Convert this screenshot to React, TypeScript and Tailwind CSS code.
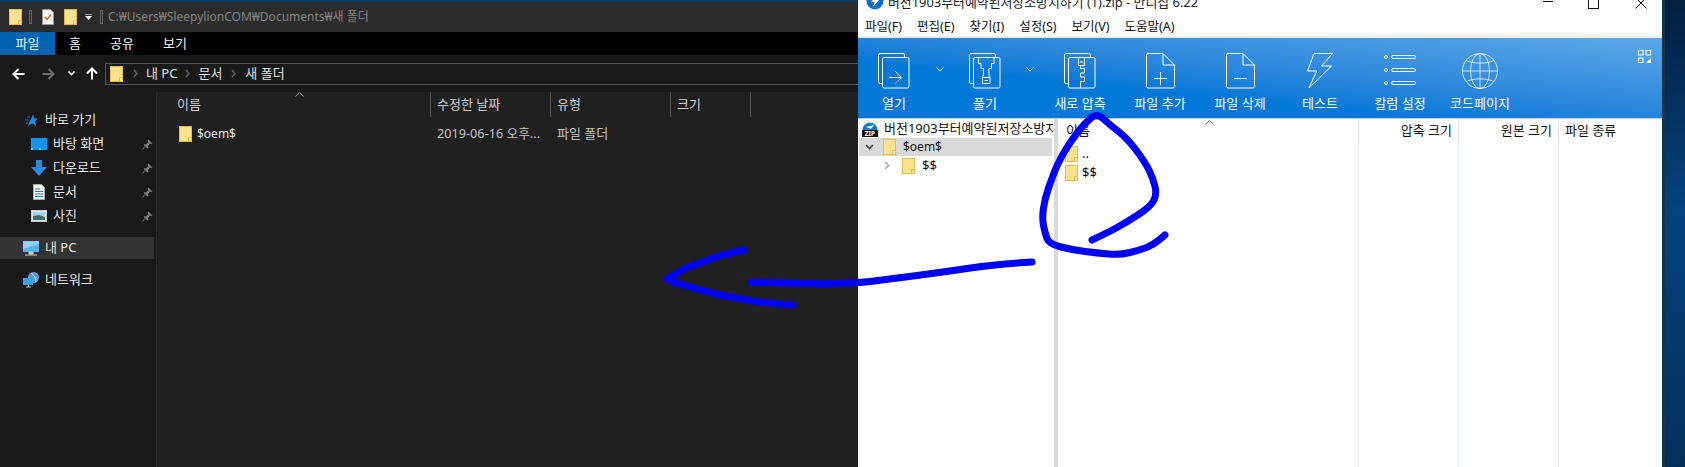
import type { ReactNode } from "react";

function Folder({ className = "" }: { className?: string }) {
  return (
    <svg viewBox="0 0 13 16" className={`w-[13px] h-[16px] shrink-0 ${className}`}>
      <rect x="0.5" y="0.5" width="12" height="15" fill="#fde28f" stroke="#e6bb50" />
      <path d="M9.5 15.5V11.5H12.5" fill="#fff0b8" stroke="#e6bb50" />
    </svg>
  );
}

function Pin() {
  return (
    <svg viewBox="0 0 11 11" className="w-[11px] h-[11px] ml-auto mr-[3px] shrink-0">
      <path d="M6.5 .5L10.5 4.5L9.5 5L8 4.8L6 7L6.2 8.8L5.2 9.6L1.6 6L2.4 5L4.2 5.2L6.2 3.2L6 1.6Z" fill="#767b80" />
      <path d="M3 7.5L.5 10.5" stroke="#767b80" />
    </svg>
  );
}

function NavRow({ icon, label, pin }: { icon: ReactNode; label: string; pin?: boolean }) {
  return (
    <div className="flex items-center h-6 pl-[31px]">
      <div className="w-[22px] shrink-0">{icon}</div>
      <span className="text-[#e6e6e6]">{label}</span>
      {pin && <Pin />}
    </div>
  );
}

function Chevron() {
  return (
    <svg viewBox="0 0 8 5" className="w-2 h-[5px]">
      <path d="M.5 .5L4 4L7.5 .5" fill="none" stroke="#fff" />
    </svg>
  );
}

function ToolItem({ w, label, children }: { w: string; label: string; children: ReactNode }) {
  return (
    <div className={`${w} shrink-0 flex flex-col items-center`}>
      <div className="h-[50px] pt-[15px] flex items-start justify-center">{children}</div>
      <span className="text-white mt-[6px] leading-[18px]">{label}</span>
    </div>
  );
}

function Crumb({ className = "mx-[8px]" }: { className?: string }) {
  return (
    <svg viewBox="0 0 5 9" className={`w-[5px] h-[9px] ${className}`}>
      <path d="M1 1L4 4.5L1 8" fill="none" stroke="#606060" strokeWidth="1.6" />
    </svg>
  );
}

// rounds off the corners of a pen stroke
function smooth(pts: number[][]) {
  let d = `M${pts[0][0]} ${pts[0][1]}`;
  for (let i = 1; i < pts.length - 1; i++) {
    const mx = (pts[i][0] + pts[i + 1][0]) / 2;
    const my = (pts[i][1] + pts[i + 1][1]) / 2;
    d += `Q${pts[i][0]} ${pts[i][1]} ${mx} ${my}`;
  }
  const last = pts[pts.length - 1];
  return `${d}L${last[0]} ${last[1]}`;
}

const loop = [
  [1092, 240], [1107, 233], [1127, 222], [1150, 207], [1157, 195], [1153, 178], [1145, 162], [1127, 138],
  [1110, 125], [1097, 113], [1085, 123], [1070, 142], [1058, 163], [1052, 178], [1045, 198], [1042, 218],
  [1045, 233], [1049, 244], [1073, 250], [1097, 253], [1120, 255], [1140, 250], [1153, 245], [1165, 235],
];
const shaft = [[1032, 262], [997, 264], [944, 272], [890, 279], [858, 283], [811, 284], [751, 282]];

const iconStroke = { fill: "none", stroke: "#fff", strokeWidth: 1 };

function Explorer() {
  return (
    <div className="w-[858px] shrink-0 flex flex-col bg-[#202020]">
      <div className="h-[2px] bg-[#0d3a66]" />
      <div className="h-[30px] bg-[#2b2b2b] flex items-center pl-[9px] text-[#858585]">
        <Folder />
        <div className="ml-[7px] w-[3px] h-[14px] border border-[#666]" />
        <svg viewBox="0 0 12 16" className="w-3 h-4 ml-[10px]">
          <path d="M.5 .5H8.5L11.5 3.5V15.5H.5Z" fill="#f4f4f4" stroke="#999" />
          <path d="M3 8L5 10.5L9 5.5" fill="none" stroke="#d9602c" strokeWidth="1.4" />
        </svg>
        <Folder className="ml-[10px]" />
        <svg viewBox="0 0 7 6" className="w-[7px] h-[6px] ml-[8px]">
          <path d="M0 0H7" stroke="#fff" />
          <path d="M0 2L3.5 6L7 2Z" fill="#fff" />
        </svg>
        <div className="ml-[8px] w-[3px] h-[14px] border border-[#666]" />
        <span className="ml-[5px] whitespace-nowrap text-[12px]">C:₩Users₩SleepylionCOM₩Documents₩새 폴더</span>
      </div>
      <div className="h-[23px] bg-black flex text-[#f2f2f2]">
        <div className="w-[55px] bg-[#0063b1] text-center leading-[22px]">파일</div>
        <div className="w-[40px] text-center leading-[22px]">홈</div>
        <div className="w-[54px] text-center leading-[22px]">공유</div>
        <div className="w-[52px] text-center leading-[22px]">보기</div>
      </div>
      <div className="h-[37px] bg-[#191919] flex items-center pl-[12px]">
        <svg viewBox="0 0 13 12" className="w-[13px] h-3">
          <path d="M12.5 6H2M6.5 1L1.5 6L6.5 11" fill="none" stroke="#fff" strokeWidth="2" />
        </svg>
        <svg viewBox="0 0 13 12" className="w-[13px] h-3 ml-[17px]">
          <path d="M.5 6H11M6.5 1L11.5 6L6.5 11" fill="none" stroke="#6e6e6e" strokeWidth="2" />
        </svg>
        <svg viewBox="0 0 7 5" className="w-[7px] h-[5px] ml-[13px]">
          <path d="M.5 .5L3.5 3.5L6.5 .5" fill="none" stroke="#eee" strokeWidth="1.6" />
        </svg>
        <svg viewBox="0 0 12 13" className="w-3 h-[13px] ml-[11px]">
          <path d="M6 12.5V2M1 6.5L6 1.5L11 6.5" fill="none" stroke="#fff" strokeWidth="2" />
        </svg>
        <div className="ml-[7px] flex-1 h-[22px] border border-r-0 border-[#555] flex items-center pl-[4px] text-[#e0e0e0]">
          <Folder />
          <div className="ml-[2px] flex items-center">
            <Crumb />
            <span>내 PC</span>
            <Crumb />
            <span>문서</span>
            <Crumb className="ml-[9px] mr-[9px]" />
            <span>새 폴더</span>
          </div>
        </div>
      </div>
      <div className="flex-1 flex min-h-0">
        <div className="w-[156px] shrink-0 bg-[#191919] pt-[16px]">
          <div className="flex items-center h-6 pl-[25px]">
            <svg viewBox="0 0 13 13" className="w-[13px] h-[13px] mr-[7px]">
              <path d="M8 0L9.4 4.4H13L10 7L11.2 12L7.2 9.2L3 12L4.6 7.4L6.4 4.4Z" fill="#1a8ae6" />
              <path d="M0 6H3M1 9H3M2 3H5" stroke="#1a6fb5" />
            </svg>
            <span className="text-[#e6e6e6]">바로 가기</span>
          </div>
          <NavRow
            pin
            label="바탕 화면"
            icon={
              <svg viewBox="0 0 16 12" className="w-4 h-3">
                <rect width="16" height="12" fill="#1593ee" />
                <path d="M0 11H16" stroke="#d5ecff" strokeDasharray="2 6" />
              </svg>
            }
          />
          <NavRow
            pin
            label="다운로드"
            icon={
              <svg viewBox="0 0 16 16" className="w-4 h-4">
                <path d="M5 0H11V7H16L8 16L0 7H5Z" fill="#2e89e0" />
              </svg>
            }
          />
          <NavRow
            pin
            label="문서"
            icon={
              <svg viewBox="0 0 16 16" className="w-4 h-4">
                <path d="M2.5 .5H10.5L13.5 3.5V15.5H2.5Z" fill="#f4f4f4" stroke="#aaa" />
                <path d="M4 5H9M4 7.5H12M4 10H12M4 12.5H12" stroke="#3a7ab8" />
              </svg>
            }
          />
          <NavRow
            pin
            label="사진"
            icon={
              <svg viewBox="0 0 16 12" className="w-4 h-3">
                <rect x=".5" y=".5" width="15" height="11" fill="#dfe9f2" stroke="#c8c8c8" />
                <path d="M2 2H14V6H2Z" fill="#a8cdea" />
                <path d="M2 6L8 5L14 7V10H2Z" fill="#3f6f62" />
              </svg>
            }
          />
          <div className="mt-[9px] mr-[2px] h-[22px] bg-[#333] flex items-center pl-[23px]">
            <svg viewBox="0 0 16 15" className="w-4 h-[15px] mr-[6px]">
              <rect width="16" height="11" fill="#56b4f5" />
              <path d="M0 0H16V3L0 8Z" fill="#8fd0fb" />
              <path d="M6 11H10V13H6ZM2 14H14" stroke="#cfcfcf" fill="#cfcfcf" />
            </svg>
            <span className="text-[#e6e6e6]">내 PC</span>
          </div>
          <div className="mt-[9px] h-6 flex items-center pl-[23px]">
            <svg viewBox="0 0 16 16" className="w-4 h-4 mr-[6px]">
              <circle cx="10.5" cy="5.5" r="5.5" fill="#5c9bd0" />
              <path d="M8 1C11 3 13 6 13 10" stroke="#cfe4f5" fill="none" />
              <rect x="0" y="6" width="10" height="7" fill="#36a3ee" />
              <path d="M3 15H8M5.5 13V15" stroke="#c8c8c8" />
            </svg>
            <span className="text-[#e6e6e6]">네트워크</span>
          </div>
        </div>
        <div className="w-[1px] bg-[#2b2b2b]" />
        <div className="flex-1 min-w-0 pl-[20px] relative">
          <svg viewBox="0 0 9 5" className="absolute left-[138px] top-0 w-[9px] h-[5px]">
            <path d="M.5 4.5L4.5 .5L8.5 4.5" fill="none" stroke="#a0a0a0" />
          </svg>
          <div className="flex h-[25px] items-center text-[#cfcfcf]">
            <div className="w-[253px] leading-[25px]">이름</div>
            <div className="w-[120px] h-full border-l border-[#555] pl-[6px] leading-[25px]">수정한 날짜</div>
            <div className="w-[120px] h-full border-l border-[#555] pl-[6px] leading-[25px]">유형</div>
            <div className="w-[80px] h-full border-l border-[#555] pl-[6px] leading-[25px]">크기</div>
            <div className="h-full border-l border-[#555]" />
          </div>
          <div className="flex h-[33px] items-center">
            <div className="w-[253px] flex items-center pl-[2px] text-[#e6e6e6]">
              <Folder />
              <span className="ml-[5px] text-[12px]">$oem$</span>
            </div>
            <div className="w-[120px] pl-[7px] text-[#c4c4c4] whitespace-nowrap text-[12.7px]">2019-06-16 오후...</div>
            <div className="w-[120px] pl-[7px] text-[#c4c4c4]">파일 폴더</div>
          </div>
        </div>
      </div>
    </div>
  );
}

function Bandizip() {
  return (
    <div className="w-[804px] shrink-0 flex flex-col bg-white text-[#111]">
      <div className="h-[28px] -mt-[11px] flex items-center pl-[8px] relative">
        <svg viewBox="0 0 18 18" className="w-[18px] h-[18px] -mt-[4px]">
          <circle cx="9" cy="9" r="8.5" fill="#0b6fd0" />
          <path d="M11 3L5 10H8.5L7 15L13 8H9.5Z" fill="#fff" />
        </svg>
        <span className="ml-[4px] whitespace-nowrap text-[#222] text-[12.9px]">버전1903부터예약된저장소방지하기 (1).zip - 반디집 6.22</span>
        <div className="ml-auto flex items-center pr-[15px]">
          <svg viewBox="0 0 10 1" className="w-[10px] h-[1px] mb-[4px]"><path d="M0 .5H10" stroke="#111" /></svg>
          <svg viewBox="0 0 11 11" className="w-[11px] h-[11px] ml-[35px]"><rect x=".5" y=".5" width="10" height="10" fill="none" stroke="#111" /></svg>
          <svg viewBox="0 0 12 12" className="w-3 h-3 ml-[36px]"><path d="M.5 .5L11.5 11.5M11.5 .5L.5 11.5" stroke="#111" /></svg>
        </div>
      </div>
      <div className="h-[19px] flex items-center pl-[7px] pt-[1px] gap-[15px] whitespace-nowrap text-[12.5px]">
        <span>파일(F)</span>
        <span>편집(E)</span>
        <span>찾기(I)</span>
        <span>설정(S)</span>
        <span>보기(V)</span>
        <span>도움말(A)</span>
      </div>
      <div className="h-[2px] bg-[#f0f0f0]" />
      <div className="h-[80px] flex bg-linear-to-tr from-[#0078d7] from-35% to-[#5ca8e8] relative">
        <ToolItem w="w-[72px]" label="열기">
          <svg viewBox="0 0 32 36" className="w-8 h-9" {...iconStroke}>
            <path d="M4 30.5H2A1.5 1.5 0 0 1 .5 29V2A1.5 1.5 0 0 1 2 .5H25A1.5 1.5 0 0 1 26.5 2V4.5" />
            <rect x="4.5" y="4.5" width="26.5" height="30.5" rx="1.5" />
            <path d="M11 24.5H23M17 18L23.5 24.5L17 31" />
          </svg>
        </ToolItem>
        <div className="w-5 shrink-0 pt-[29px] flex justify-center"><Chevron /></div>
        <ToolItem w="w-[70px]" label="풀기">
          <svg viewBox="0 0 32 36" className="w-8 h-9" {...iconStroke}>
            <path d="M4 30.5H2A1.5 1.5 0 0 1 .5 29V2A1.5 1.5 0 0 1 2 .5H25A1.5 1.5 0 0 1 26.5 2V4.5" />
            <rect x="4.5" y="4.5" width="26.5" height="30.5" rx="1.5" />
            <path d="M9.5 4.5V10.5H12V15.5H14.5V21L13.5 24.5V30.5H21V24.5L20 21V15.5H22.5V10.5H25V4.5M13.5 24.5H21M15.5 27.5H19" />
          </svg>
        </ToolItem>
        <div className="w-5 shrink-0 pt-[29px] flex justify-center"><Chevron /></div>
        <ToolItem w="w-20" label="새로 압축">
          <svg viewBox="0 0 32 36" className="w-8 h-9" {...iconStroke}>
            <path d="M4 30.5H2A1.5 1.5 0 0 1 .5 29V2A1.5 1.5 0 0 1 2 .5H25A1.5 1.5 0 0 1 26.5 2V4.5" />
            <rect x="4.5" y="4.5" width="26.5" height="30.5" rx="1.5" />
            <path d="M14.5 4.5V12.5H20.5V4.5M16 9H19M16.5 12.5V15.5H20.5V20H16.5V24H20.5V28.5H16.5V35" />
          </svg>
        </ToolItem>
        <ToolItem w="w-20" label="파일 추가">
          <svg viewBox="0 0 29 36" className="w-[29px] h-9" {...iconStroke}>
            <path d="M17 .5H2A1.5 1.5 0 0 0 .5 2V33.5A1.5 1.5 0 0 0 2 35H27A1.5 1.5 0 0 0 28.5 33.5V12L17 .5V12H28.5" />
            <path d="M14.5 19V32M8 25.5H21" />
          </svg>
        </ToolItem>
        <ToolItem w="w-20" label="파일 삭제">
          <svg viewBox="0 0 29 36" className="w-[29px] h-9" {...iconStroke}>
            <path d="M17 .5H2A1.5 1.5 0 0 0 .5 2V33.5A1.5 1.5 0 0 0 2 35H27A1.5 1.5 0 0 0 28.5 33.5V12L17 .5V12H28.5" />
            <path d="M8 25.5H21" />
          </svg>
        </ToolItem>
        <ToolItem w="w-20" label="테스트">
          <svg viewBox="0 0 26 36" className="w-[26px] h-9" {...iconStroke}>
            <path d="M7 .5H25.5L14.5 13H24.5L2 35L9.7 18H.5Z" />
          </svg>
        </ToolItem>
        <ToolItem w="w-20" label="칼럼 설정">
          <svg viewBox="0 0 32 36" className="w-8 h-9" {...iconStroke}>
            <circle cx="2" cy="4" r="1.5" />
            <circle cx="2" cy="17" r="1.5" />
            <circle cx="2" cy="30" r="1.5" />
            <rect x="7.5" y="2.5" width="24" height="3" rx="1.5" />
            <rect x="7.5" y="15.5" width="24" height="3" rx="1.5" />
            <rect x="7.5" y="28.5" width="24" height="3" rx="1.5" />
          </svg>
        </ToolItem>
        <ToolItem w="w-20" label="코드페이지">
          <svg viewBox="0 0 36 36" className="w-9 h-9" fill="none" stroke="#fff" strokeOpacity=".75">
            <circle cx="18" cy="18" r="17.5" />
            <ellipse cx="18" cy="18" rx="9.5" ry="17.5" />
            <path d="M18 .5V35.5M.5 18H35.5M4 7.5C12 11 24 11 32 7.5M4 28.5C12 25 24 25 32 28.5" />
          </svg>
        </ToolItem>
        <svg viewBox="0 0 13 13" className="absolute right-[11px] top-[12px] w-[13px] h-[13px]" fill="none" stroke="#fff">
          <rect x=".5" y=".5" width="4.5" height="4.5" />
          <rect x="8" y=".5" width="4.5" height="4.5" />
          <rect x=".5" y="8" width="4.5" height="4.5" />
          <path d="M13 8V13H8Z" fill="#fff" stroke="none" />
        </svg>
      </div>
      <div className="h-[1px] bg-[#c9c9c9]" />
      <div className="flex-1 flex min-h-0">
        <div className="w-[196px] shrink-0 overflow-hidden whitespace-nowrap">
          <div className="h-[19px] flex items-center pl-[4px]">
            <svg viewBox="0 0 16 16" className="w-4 h-4 shrink-0">
              <path d="M.5 9A7.5 7.5 0 0 1 15.5 9Z" fill="#1478d4" />
              <path d="M4 6L12 4L9 8Z" fill="#fff" />
              <rect x="0" y="9" width="16" height="7" fill="#111" />
              <text x="8" y="15" textAnchor="middle" fontSize="6.5" fontWeight="700" fill="#fff">ZIP</text>
            </svg>
            <span className="ml-[6px]">버전1903부터예약된저장소방지하기</span>
          </div>
          <div className="h-[18px] bg-[#d9d9d9] mr-[2px] ml-[1px] flex items-center pl-[6px]">
            <svg viewBox="0 0 9 6" className="w-[9px] h-[6px]">
              <path d="M1 1L4.5 4.5L8 1" fill="none" stroke="#444" strokeWidth="1.6" />
            </svg>
            <Folder className="ml-[9px]" />
            <span className="ml-[7px] text-[12px]">$oem$</span>
          </div>
          <div className="h-[19px] flex items-center pl-[26px]">
            <svg viewBox="0 0 6 9" className="w-[6px] h-[9px]">
              <path d="M1 1L4.5 4.5L1 8" fill="none" stroke="#aaa" strokeWidth="1.6" />
            </svg>
            <Folder className="ml-[12px]" />
            <span className="ml-[7px]">$$</span>
          </div>
        </div>
        <div className="w-[4px] shrink-0 bg-[#d9d9d9]" />
        <div className="flex-1 min-w-0 flex relative">
          <svg viewBox="0 0 9 5" className="absolute left-[147px] top-[1px] w-[9px] h-[5px]">
            <path d="M.5 4.5L4.5 .5L8.5 4.5" fill="none" stroke="#777" />
          </svg>
          <div className="w-[300px] shrink-0 flex flex-col">
            <div className="h-[24px] pl-[8px] flex items-center">이름</div>
            <div className="pl-[7px] pt-[1px]">
              <div className="h-[19px] flex items-center">
                <Folder />
                <span className="ml-[4px] mt-[1px]">..</span>
              </div>
              <div className="h-[19px] flex items-center">
                <Folder />
                <span className="ml-[4px] mt-[1px]">$$</span>
              </div>
            </div>
          </div>
          <div className="w-[100px] shrink-0 flex flex-col">
            <div className="h-[24px] border-l border-[#e5e5e5] pr-[6px] flex items-center justify-end">압축 크기</div>
            <div className="flex-1 border-l border-[#e8f1fc]" />
          </div>
          <div className="w-[100px] shrink-0 flex flex-col">
            <div className="h-[24px] border-l border-[#e5e5e5] pr-[6px] flex items-center justify-end">원본 크기</div>
            <div className="flex-1 border-l border-[#e8f1fc]" />
          </div>
          <div className="flex-1 flex flex-col">
            <div className="h-[24px] border-l border-[#e5e5e5] pl-[6px] flex items-center">파일 종류</div>
            <div className="flex-1 border-l border-[#e8f1fc]" />
          </div>
        </div>
      </div>
    </div>
  );
}

export default function App() {
  return (
    <div className="relative flex w-[1685px] h-[467px] overflow-hidden text-[13px] leading-normal font-['Noto_Sans','Noto_Sans_CJK_KR',sans-serif]">
      <Explorer />
      <Bandizip />
      <div className="flex-1 border-l-[3px] border-[#15324f] bg-linear-to-b from-[#021f3f] via-[#05437f] via-45% to-[#02305a]" />
      {/* hand drawn blue marks on top of the screenshot */}
      <svg viewBox="0 0 1685 467" className="absolute inset-0 w-[1685px] h-[467px] pointer-events-none" fill="none" stroke="#0000ff" strokeWidth="7" strokeLinecap="round" strokeLinejoin="round">
        <path d={smooth(loop)} />
        <path d={smooth(shaft)} />
        <path d="M744 250L719 256L686 268L667 279L676 283L715 294L758 302L793 305" />
      </svg>
    </div>
  );
}
